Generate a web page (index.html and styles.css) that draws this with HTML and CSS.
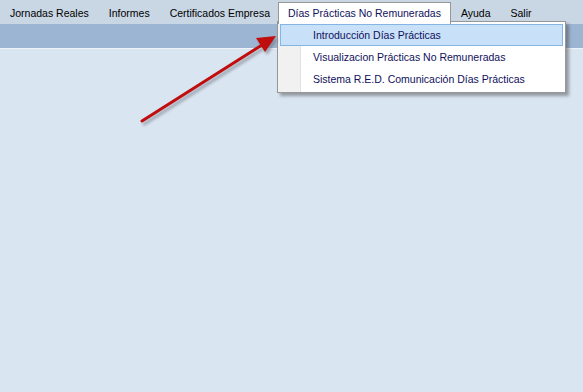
FILE: index.html
```html
<!DOCTYPE html>
<html lang="es">
<head>
    <meta charset="UTF-8">
    <title>Días Prácticas No Remuneradas</title>
    <link rel="stylesheet" href="styles.css">
</head>
<body>
    <div class="window">
        <div class="menubar">
            <div class="menu-item">Jornadas Reales</div>
            <div class="menu-item">Informes</div>
            <div class="menu-item">Certificados Empresa</div>
            <div class="menu-item open">Días Prácticas No Remuneradas</div>
            <div class="menu-item">Ayuda</div>
            <div class="menu-item">Salir</div>
        </div>
        <div class="toolbar"></div>
        <div class="workspace"></div>

        <div class="dropdown">
            <div class="drop-item active">Introducción Días Prácticas</div>
            <div class="drop-item">Visualizacion Prácticas No Remuneradas</div>
            <div class="drop-item">Sistema R.E.D. Comunicación Días Prácticas</div>
        </div>

        <svg class="arrow" width="583" height="392" viewBox="0 0 583 392">
            <defs>
                <filter id="shadow" x="-20%" y="-20%" width="140%" height="140%">
                    <feGaussianBlur stdDeviation="1.5"/>
                </filter>
            </defs>
            <g fill="#6f7680" stroke="#6f7680" opacity="0.6" filter="url(#shadow)" transform="translate(2,3)">
                <line x1="142" y1="121" x2="262" y2="45" stroke-width="3" stroke-linecap="round"/>
                <polygon points="276,36 256,38 265,52" stroke="none"/>
            </g>
            <g fill="#c00d0d" stroke="#c00d0d">
                <line x1="142" y1="121" x2="262" y2="45" stroke-width="3" stroke-linecap="round"/>
                <polygon points="276,36 256,38 265,52" stroke="none"/>
            </g>
        </svg>
    </div>
</body>
</html>
```

FILE: styles.css
```css
* {
    box-sizing: border-box;
    margin: 0;
    padding: 0;
}

body {
    font-family: 'Liberation Sans', Arial, sans-serif;
    font-size: 10.5px;
    background-color: #dae5f2;
}

.window {
    position: relative;
    width: 583px;
    height: 392px;
    overflow: hidden;
    display: flex;
    flex-direction: column;
}

.menubar {
    display: flex;
    height: 24px;
    padding-top: 2px;
    background-color: #c9d6e4;
}

.menu-item {
    padding: 0 9px;
    line-height: 20px;
    color: #000;
    border: 1px solid transparent;
    border-bottom: none;
}

.menu-item.open {
    position: relative;
    z-index: 2;
    margin-left: -2px;
    background-color: #fff;
    border-color: #979797;
    color: #10105c;
    height: 22px;
}

.toolbar {
    height: 24px;
    background-color: #9cb5d2;
}

.workspace {
    flex: 1;
    border-top: 1px solid #eef3f9;
    background-color: #dae5f2;
}

.dropdown {
    position: absolute;
    left: 277px;
    top: 21px;
    width: 289px;
    padding: 2px;
    background: linear-gradient(to right, #f1f1f1 0, #f1f1f1 22px, #e2e2e2 22px, #e2e2e2 23px, #fff 23px);
    border: 1px solid #979797;
    box-shadow: 3px 3px 3px rgba(60, 60, 60, 0.45);
    z-index: 1;
}

.drop-item {
    height: 22px;
    line-height: 20px;
    padding-left: 32px;
    color: #10105c;
    border: 1px solid transparent;
}

.drop-item.active {
    background-color: #c8e0f8;
    border-color: #83b6e6;
}

.arrow {
    position: absolute;
    left: 0;
    top: 0;
    z-index: 3;
    pointer-events: none;
}
```
